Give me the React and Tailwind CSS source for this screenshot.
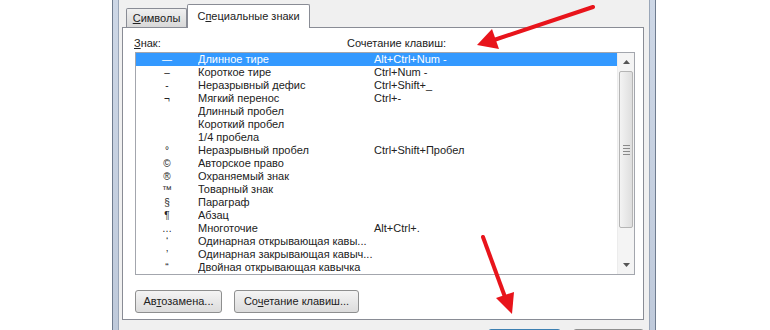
import React from 'react';

const rows = [
  { sym: '—', name: 'Длинное тире', keys: 'Alt+Ctrl+Num -' },
  { sym: '–', name: 'Короткое тире', keys: 'Ctrl+Num -' },
  { sym: '-', name: 'Неразрывный дефис', keys: 'Ctrl+Shift+_' },
  { sym: '¬', name: 'Мягкий перенос', keys: 'Ctrl+-' },
  { sym: '', name: 'Длинный пробел', keys: '' },
  { sym: '', name: 'Короткий пробел', keys: '' },
  { sym: '', name: '1/4 пробела', keys: '' },
  { sym: '°', name: 'Неразрывный пробел', keys: 'Ctrl+Shift+Пробел' },
  { sym: '©', name: 'Авторское право', keys: '' },
  { sym: '®', name: 'Охраняемый знак', keys: '' },
  { sym: '™', name: 'Товарный знак', keys: '' },
  { sym: '§', name: 'Параграф', keys: '' },
  { sym: '¶', name: 'Абзац', keys: '' },
  { sym: '…', name: 'Многоточие', keys: 'Alt+Ctrl+.' },
  { sym: '‘', name: 'Одинарная открывающая кавы...', keys: '' },
  { sym: '’', name: 'Одинарная закрывающая кавыч...', keys: '' },
  { sym: '“', name: 'Двойная открывающая кавычка', keys: '' },
];

function Row({ sym, name, keys, selected }) {
  return (
    <div className={`flex h-[13px] leading-[13px] whitespace-nowrap ${selected ? 'bg-[#3399ff] text-white' : 'text-[#222]'}`}>
      <span className="w-[62px] text-center text-[10px]">{sym}</span>
      <span className="w-[176px] overflow-hidden">{name}</span>
      <span>{keys}</span>
    </div>
  );
}

function WinButton({ children, w }) {
  return (
    <button className={`${w} h-[23px] rounded-[3px] border border-[#8e8f8f] bg-gradient-to-b from-[#f4f4f4] to-[#dcdcdc] text-[11px] text-[#222] leading-none`}>
      {children}
    </button>
  );
}

function Scrollbar() {
  return (
    <div className="w-[17px] flex flex-col bg-[#f4f4f4] border-l border-[#ececec]">
      <div className="h-[18px] flex items-center justify-center">
        <svg width="7" height="4" viewBox="0 0 7 4"><path d="M0 4 L3.5 0 L7 4 Z" fill="#555" /></svg>
      </div>
      <div className="mx-[1px] h-[157px] rounded-[2px] border border-[#b5b5b5] bg-gradient-to-r from-[#f3f3f3] to-[#dedede] flex items-center justify-center">
        <div className="flex flex-col gap-[2px]">
          <div className="w-[7px] h-px bg-[#8a8a8a]" />
          <div className="w-[7px] h-px bg-[#8a8a8a]" />
          <div className="w-[7px] h-px bg-[#8a8a8a]" />
          <div className="w-[7px] h-px bg-[#8a8a8a]" />
        </div>
      </div>
      <div className="flex-1" />
      <div className="h-[18px] flex items-center justify-center">
        <svg width="7" height="4" viewBox="0 0 7 4"><path d="M0 0 L3.5 4 L7 0 Z" fill="#555" /></svg>
      </div>
    </div>
  );
}

export default function App() {
  return (
    <div className="relative w-[770px] h-[330px] overflow-hidden bg-white" style={{ fontFamily: '"Liberation Sans", Arial, sans-serif' }}>
      {/* Dialog window */}
      <div className="ml-[112px] w-[544px] h-[330px] border-x border-[#6f7c8f] bg-gradient-to-b from-[#cdd7e6] to-[#bfcadb] px-[5px]">
        <div className="h-full bg-[#f0f0f0] border-x border-[#9aa6b8] pt-[3px] pl-[3px] pr-[5px] text-[11px]">
          {/* Tabs */}
          <div className="flex items-end h-[24px] pl-[4px] relative z-10">
            <div className="h-[19px] w-[61px] border border-b-0 border-[#898c95] rounded-t-[2px] bg-gradient-to-b from-[#f0f0f0] to-[#d8d8d8] flex items-center justify-center text-[#222]">
              <span><span className="underline">С</span>имволы</span>
            </div>
            <div className="h-[24px] w-[123px] -mb-px border border-b-0 border-[#898c95] rounded-t-[2px] bg-white flex items-center justify-center text-[#222]">
              <span>С<span className="underline">п</span>ециальные знаки</span>
            </div>
          </div>

          {/* Tab panel */}
          <div className="h-[293px] border border-[#898c95] bg-white">
            <div className="flex mt-[8px] pl-[11px] h-[15px] leading-[15px] text-[#222]">
              <span className="w-[213px]"><span className="underline">З</span>нак:</span>
              <span>Сочетание клавиш:</span>
            </div>

            <div className="ml-[12px] mt-[1px] w-[500px] h-[223px] border border-[#a3a6ad] flex">
              <div className="flex-1">
                {rows.map((r, i) => (
                  <Row key={i} {...r} selected={i === 0} />
                ))}
              </div>
              <Scrollbar />
            </div>

            <div className="flex gap-[12px] ml-[12px] mt-[15px]">
              <WinButton w="w-[87px]">Ав<span className="underline">т</span>озамена...</WinButton>
              <WinButton w="w-[125px]">Со<span className="underline">ч</span>етание клавиш...</WinButton>
            </div>
          </div>

          {/* Bottom buttons (cut off) */}
          <div className="flex justify-end gap-[12px] mt-[9px]">
            <div className="w-[73px] h-[23px] rounded-[3px] border border-[#3c7fb1] bg-[#cdeaf7]" />
            <div className="w-[71px] h-[23px] rounded-[3px] border border-[#8e8f8f] bg-[#f0f0f0]" />
          </div>
        </div>
      </div>

      {/* Red annotation arrows */}
      <svg className="absolute inset-0 pointer-events-none" width="770" height="330" viewBox="0 0 770 330">
        <line x1="593" y1="7" x2="494" y2="40" stroke="#e8141b" strokeWidth="4" strokeLinecap="round" />
        <polygon points="477,45 492,29 499,49" fill="#e8141b" />
        <line x1="483" y1="237" x2="505" y2="297" stroke="#e8141b" strokeWidth="4" strokeLinecap="round" />
        <polygon points="512,314 496,298 514,292" fill="#e8141b" />
      </svg>
    </div>
  );
}
